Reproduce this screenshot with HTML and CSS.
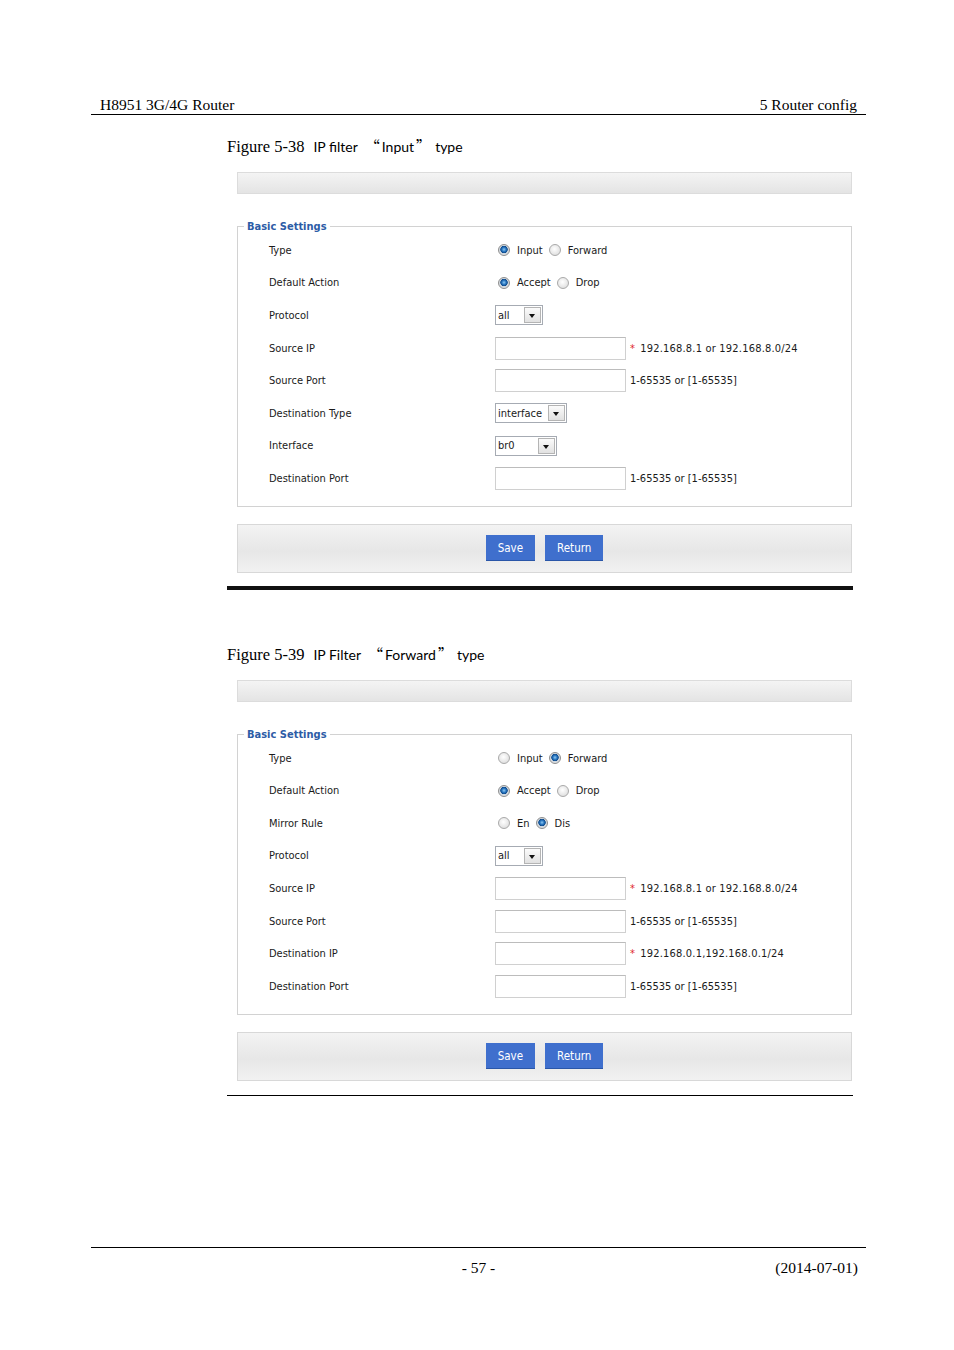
FILE: index.html
```html
<!DOCTYPE html>
<html lang="en">
  <head>
    <meta charset="UTF-8" />
    <meta name="viewport" content="width=device-width, initial-scale=1.0" />
    <title>H8951 3G/4G Router - IP filter</title>
    <link rel="stylesheet" href="styles.css">
  </head>
  <body>
    <div class="page">
      <div class="doc-header">
        <span>H8951 3G/4G Router</span>
        <span>5 Router config</span>
      </div>

      <!-- figure 5-38 -->
      <div class="figure">
        <p class="caption">
          <span class="fig-no">Figure 5-38</span><span class="fig-title">IP filter</span><span class="quote"><span class="qm">“</span>Input<span class="qm">”</span></span><span class="fig-title">type</span>
        </p>
        <div class="shot">
          <div class="topbar"></div>
          <fieldset class="settings">
            <legend>Basic Settings</legend>
            <div class="row">
              <div class="label">Type</div>
              <div class="value">
                <span class="radio on"></span><span class="opt">Input</span>
                <span class="radio"></span><span class="opt">Forward</span>
              </div>
            </div>
            <div class="row">
              <div class="label">Default Action</div>
              <div class="value">
                <span class="radio on"></span><span class="opt">Accept</span>
                <span class="radio"></span><span class="opt">Drop</span>
              </div>
            </div>
            <div class="row">
              <div class="label">Protocol</div>
              <div class="value">
                <span class="select sm"><span class="sel-text">all</span><span class="arrow"></span></span>
              </div>
            </div>
            <div class="row">
              <div class="label">Source IP</div>
              <div class="value">
                <span class="field"></span><span class="hint ip"><span class="req">*</span>192.168.8.1 or 192.168.8.0/24</span>
              </div>
            </div>
            <div class="row">
              <div class="label">Source Port</div>
              <div class="value">
                <span class="field"></span><span class="hint">1-65535 or [1-65535]</span>
              </div>
            </div>
            <div class="row">
              <div class="label">Destination Type</div>
              <div class="value">
                <span class="select lg"><span class="sel-text">interface</span><span class="arrow"></span></span>
              </div>
            </div>
            <div class="row">
              <div class="label">Interface</div>
              <div class="value">
                <span class="select md"><span class="sel-text">br0</span><span class="arrow"></span></span>
              </div>
            </div>
            <div class="row">
              <div class="label">Destination Port</div>
              <div class="value">
                <span class="field"></span><span class="hint">1-65535 or [1-65535]</span>
              </div>
            </div>
          </fieldset>
          <div class="btnbar">
            <button class="btn">Save</button>
            <button class="btn">Return</button>
          </div>
        </div>
        <div class="rule thick"></div>
      </div>

      <!-- figure 5-39 -->
      <div class="figure second">
        <p class="caption">
          <span class="fig-no">Figure 5-39</span><span class="fig-title">IP Filter</span><span class="quote"><span class="qm">“</span>Forward<span class="qm">”</span></span><span class="fig-title">type</span>
        </p>
        <div class="shot">
          <div class="topbar"></div>
          <fieldset class="settings">
            <legend>Basic Settings</legend>
            <div class="row">
              <div class="label">Type</div>
              <div class="value">
                <span class="radio"></span><span class="opt">Input</span>
                <span class="radio on"></span><span class="opt">Forward</span>
              </div>
            </div>
            <div class="row">
              <div class="label">Default Action</div>
              <div class="value">
                <span class="radio on"></span><span class="opt">Accept</span>
                <span class="radio"></span><span class="opt">Drop</span>
              </div>
            </div>
            <div class="row">
              <div class="label">Mirror Rule</div>
              <div class="value">
                <span class="radio"></span><span class="opt">En</span>
                <span class="radio on"></span><span class="opt">Dis</span>
              </div>
            </div>
            <div class="row">
              <div class="label">Protocol</div>
              <div class="value">
                <span class="select sm"><span class="sel-text">all</span><span class="arrow"></span></span>
              </div>
            </div>
            <div class="row">
              <div class="label">Source IP</div>
              <div class="value">
                <span class="field"></span><span class="hint ip"><span class="req">*</span>192.168.8.1 or 192.168.8.0/24</span>
              </div>
            </div>
            <div class="row">
              <div class="label">Source Port</div>
              <div class="value">
                <span class="field"></span><span class="hint">1-65535 or [1-65535]</span>
              </div>
            </div>
            <div class="row">
              <div class="label">Destination IP</div>
              <div class="value">
                <span class="field"></span><span class="hint ip"><span class="req">*</span>192.168.0.1,192.168.0.1/24</span>
              </div>
            </div>
            <div class="row">
              <div class="label">Destination Port</div>
              <div class="value">
                <span class="field"></span><span class="hint">1-65535 or [1-65535]</span>
              </div>
            </div>
          </fieldset>
          <div class="btnbar">
            <button class="btn">Save</button>
            <button class="btn">Return</button>
          </div>
        </div>
        <div class="rule thin"></div>
      </div>

      <div class="doc-footer">
        <span></span>
        <span>- 57 -</span>
        <span class="date">(2014-07-01)</span>
      </div>
    </div>
  </body>
</html>
```

FILE: styles.css
```css
* {
  box-sizing: border-box;
  margin: 0;
  padding: 0;
}
body {
  background-color: #fff;
  color: #000;
}
.page {
  width: 775px;
  margin-left: 91px;
  padding-top: 95px;
  font-family: "Liberation Serif", "Times New Roman", serif;
}
.doc-header {
  display: flex;
  justify-content: space-between;
  padding: 0 9px;
  font-size: 15.5px;
  line-height: 19px;
  border-bottom: 1px solid #000;
}

/* figures */
.figure {
  margin-left: 136px;
  width: 626px;
}
.caption {
  height: 20px;
  font-size: 16.5px;
  line-height: 20px;
  margin-top: 22px;
  white-space: nowrap;
}
.second .caption {
  margin-top: 55px;
}
.fig-no {
  margin-right: 9px;
}
.fig-title,
.quote {
  font-family: Lato, "Open Sans", sans-serif;
  font-size: 14px;
}
.quote {
  margin: 0 4px 0 7px;
}
.qm {
  font-family: "Noto Sans CJK SC", sans-serif;
  font-size: 15px;
  line-height: 1;
}
.qm:first-child {
  margin-right: 2px;
}
.qm:last-child {
  margin-left: 2px;
}
.shot {
  margin: 15px 0 0 10px;
  width: 615px;
  font-family: "DejaVu Sans Condensed", "DejaVu Sans", sans-serif;
  font-size: 11px;
  color: #1a1a1a;
}
.topbar {
  height: 22px;
  border: 1px solid #dcdcdc;
  background: linear-gradient(#f4f4f4, #e4e4e4);
}

/* settings box */
.settings {
  margin-top: 25px;
  border: 1px solid #d2d2d2;
  padding: 0 0 11px 6px;
  min-inline-size: 0;
}
.settings legend {
  padding: 0 3px;
  font-size: 11px;
  font-weight: bold;
  line-height: 15px;
  color: #2d5ca6;
}
.row {
  display: grid;
  grid-template-columns: 226px 1fr;
  align-items: center;
  height: 32.6px;
  padding-left: 25px;
}
.value {
  display: flex;
  align-items: center;
}
.radio {
  display: inline-block;
  width: 12px;
  height: 12px;
  margin-left: 3px;
  border: 1px solid #a9a9a9;
  border-radius: 50%;
  background: radial-gradient(circle at 45% 40%, #fff, #d6d6d6);
}
.radio.on {
  border-color: #8e8e8e;
  background: radial-gradient(circle at 50% 45%, #8fcaf2 0, #2b78c2 2px, #0d4a8c 3.4px, #cfd6dd 4px, #f0f0f0 100%);
}
.opt {
  margin: 0 3px 0 7px;
}
.select {
  display: inline-flex;
  justify-content: space-between;
  align-items: center;
  height: 20px;
  padding-left: 2px;
  border: 1px solid #a6abb3;
  background-color: #fff;
}
.select.sm {
  width: 48px;
}
.select.md {
  width: 62px;
}
.select.lg {
  width: 72px;
}
.arrow {
  position: relative;
  width: 17px;
  height: 16px;
  margin-right: 1px;
  border: 1px solid #b4b4b4;
  background: linear-gradient(#fbfbfb, #e1e1e1);
}
.arrow::after {
  content: "";
  position: absolute;
  left: 4px;
  top: 6px;
  border-left: 3.5px solid transparent;
  border-right: 3.5px solid transparent;
  border-top: 4px solid #111;
}
.field {
  display: inline-block;
  width: 131px;
  height: 23px;
  border: 1px solid #d0d0d0;
  border-top-color: #bcbcbc;
  background-color: #fff;
}
.hint {
  margin-left: 4px;
}
.hint.ip {
  letter-spacing: 0.2px;
}
.req {
  color: #e0262b;
  margin-right: 5px;
}

/* buttons */
.btnbar {
  display: flex;
  justify-content: center;
  align-items: center;
  gap: 10px;
  height: 49px;
  margin-top: 17px;
  border: 1px solid #d8d8d8;
  background: linear-gradient(#f3f3f3, #e7e7e7 55%, #f1f1f1);
}
.btn {
  height: 26px;
  padding: 0 12px;
  border: none;
  border-bottom: 1px solid #2a56a8;
  background-color: #3f6fcd;
  color: #fff;
  font-family: "DejaVu Sans Condensed", "DejaVu Sans", sans-serif;
  font-size: 11.5px;
}

.rule.thick {
  height: 4px;
  margin-top: 13px;
  background-color: #111;
}
.rule.thin {
  height: 1px;
  margin-top: 14px;
  background-color: #000;
}

.doc-footer {
  display: grid;
  grid-template-columns: 1fr auto 1fr;
  margin-top: 151px;
  padding: 10px 8px 0;
  border-top: 1px solid #000;
  font-size: 15.5px;
  line-height: 19px;
}
.doc-footer .date {
  justify-self: end;
}
```
